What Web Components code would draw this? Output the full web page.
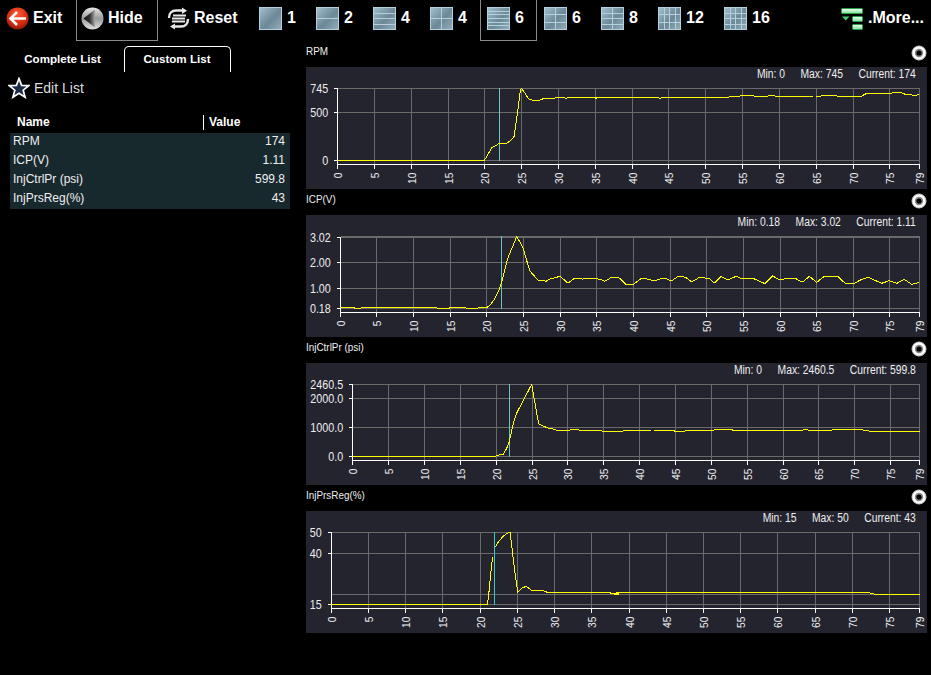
<!DOCTYPE html>
<html>

<head>
  <title>Data Graph</title>
  <style>
    html, body { margin: 0; background: #000; height: 100%; overflow: hidden; }
    body { font-family: "Liberation Sans", Arial, sans-serif; color: #fff; }
  </style>
</head>

<body>
  <scan-app></scan-app>

  <script>
    const FONT = '"Liberation Sans", Arial, sans-serif';

    // convert crop coordinates to page coordinates
    const toPage = (ox, oy, pts) => pts.map(p => [ox + p[0] / 3, oy + p[1] / 3]);

    const CHARTS = {
      rpm: {
        title: 'RPM', min: '0', max: '745', current: '174', top: 67,
        x0: 337.7, x1: 919.3, axis: 164, cursor: 499, cursorColor: '#6cc4c4',
        grid: [[88, '745'], [112, '500'], [160, '0']],
        lines: [
          toPage(300, 60, [[113, 301], [553, 301], [560, 290], [575, 263], [590, 255], [598, 250], [620, 250], [630, 243], [642, 230], [648, 190], [655, 140], [660, 100], [664, 85], [672, 95], [686, 117], [695, 120], [708, 123], [720, 120], [733, 115], [762, 115], [775, 111], [790, 113], [800, 115], [806, 112], [883, 112], [888, 115], [893, 112], [960, 112]])
            .concat(toPage(620, 60, [[112, 112], [120, 116], [128, 112], [326, 112], [328, 109], [360, 109], [364, 105], [398, 105], [402, 108], [444, 108], [448, 105], [460, 105], [464, 108], [578, 108]])),
          toPage(620, 60, [[588, 109], [602, 109], [606, 105], [646, 105], [650, 108], [725, 108], [735, 103], [740, 100], [810, 100], [825, 98], [835, 97], [850, 100], [855, 103], [870, 103], [875, 105], [890, 105], [898, 103]])
        ]
      },
      icp: {
        title: 'ICP(V)', min: '0.18', max: '3.02', current: '1.11', top: 215,
        x0: 340.3, x1: 919.3, axis: 312, cursor: 501, cursorColor: '#6cc4c4',
        grid: [[236, ''], [237, '3.02'], [262, '2.00'], [288, '1.00'], [308, '0.18']],
        lines: [
          toPage(300, 195, [[121, 337], [160, 337], [165, 340], [183, 340], [185, 337], [410, 337], [412, 340], [448, 340], [450, 337], [497, 337], [499, 340], [534, 340], [536, 337], [562, 337], [572, 328], [585, 310], [595, 290], [604, 265], [612, 235], [622, 195], [628, 178], [640, 150], [650, 125], [660, 142], [670, 160], [678, 190], [690, 228], [703, 243], [715, 256], [730, 256], [738, 259], [752, 251], [765, 248], [780, 244], [790, 252], [800, 262], [808, 262], [822, 251], [845, 251], [848, 253], [850, 251], [892, 251], [905, 255], [914, 259], [925, 253], [933, 247]])
            .concat(toPage(611, 195, [[22, 247], [30, 253], [45, 268], [67, 268], [90, 251], [100, 250], [115, 254], [132, 257], [152, 250], [165, 251], [175, 256], [185, 255], [200, 245], [212, 244], [225, 248], [240, 259], [250, 257], [265, 247], [288, 250], [297, 252], [309, 265], [330, 245], [345, 252], [355, 253], [375, 244], [390, 250], [425, 250], [440, 256], [462, 266], [485, 243], [502, 253], [518, 253], [522, 250], [553, 250], [570, 260], [578, 259], [595, 244], [617, 262], [640, 244], [683, 246], [690, 254], [703, 265], [730, 265], [750, 254], [772, 247], [790, 255], [812, 265], [835, 257], [858, 265], [880, 253], [902, 268], [925, 262]]))
        ]
      },
      inj: {
        title: 'InjCtrlPr (psi)', min: '0', max: '2460.5', current: '599.8', top: 363,
        x0: 352.7, x1: 919.3, axis: 460, cursor: 509, cursorColor: '#6cc4c4',
        grid: [[384, '2460.5'], [398, '2000.0'], [427, '1000.0'], [456, '0.0']],
        lines: [
          toPage(300, 340, [[158, 349], [587, 349], [590, 346], [610, 343], [620, 325], [628, 305], [640, 250], [652, 215], [668, 185], [695, 133], [705, 190], [716, 252], [730, 258], [745, 265], [765, 268], [770, 271], [810, 271], [812, 268], [836, 268], [838, 271], [904, 271], [906, 274], [933, 274]])
            .concat(toPage(611, 340, [[36, 274], [38, 271], [120, 271]])),
          toPage(611, 340, [[129, 271], [189, 271], [191, 274], [221, 274], [223, 271], [308, 271], [310, 268], [363, 268], [365, 271], [575, 271], [577, 268], [590, 268], [592, 271], [662, 271], [664, 268], [755, 268], [757, 271], [773, 271], [775, 274], [926, 274]])
        ]
      },
      reg: {
        title: 'InjPrsReg(%)', min: '15', max: '50', current: '43', top: 511,
        x0: 331.3, x1: 919.3, axis: 608, cursor: 494, cursorColor: '#3cc8c8',
        grid: [[532, '50'], [553, '40'], [594, ''], [604, '15']],
        lines: [
          toPage(300, 485, [[94, 358], [562, 358], [566, 330], [572, 265], [578, 215]]),
          toPage(300, 485, [[586, 187], [590, 178], [600, 165], [610, 153], [620, 146], [630, 142], [636, 190], [642, 240], [650, 300], [653, 322], [665, 310], [678, 304], [695, 316], [728, 316], [742, 322], [930, 322], [932, 325], [945, 325], [947, 326], [960, 322]])
            .concat(toPage(611, 340, [[8, 760], [10, 763], [22, 763], [24, 757], [776, 757], [778, 760], [788, 760], [790, 763], [926, 763]]))
        ]
      }
    };

    const crisp = v => Math.floor(v) + 0.5;

    class ScanApp extends HTMLElement {
      connectedCallback() {
        this.attachShadow({ mode: 'open' }).innerHTML = `
          <style>
            :host { display: flex; flex-direction: column; height: 675px; background: #000; color: #fff; font-family: ${FONT}; }
            main { display: flex; flex: 1; }
            .right { display: flex; flex-direction: column; }
          </style>
          <scan-toolbar></scan-toolbar>
          <main>
            <scan-list></scan-list>
            <div class="right">
              <chart-panel chart="rpm"></chart-panel>
              <chart-panel chart="icp"></chart-panel>
              <chart-panel chart="inj"></chart-panel>
              <chart-panel chart="reg"></chart-panel>
            </div>
          </main>`;
      }
    }

    class ScanToolbar extends HTMLElement {
      connectedCallback() {
        this.attachShadow({ mode: 'open' }).innerHTML = `
          <style>
            :host { display: flex; height: 41px; }
            .end { margin-left: auto; }
          </style>
          <tool-button icon="exit" w="76" pad="5" gap="4">Exit</tool-button>
          <tool-button icon="hide" w="82" pad="4" gap="4" active>Hide</tool-button>
          <tool-button icon="reset" w="94" pad="8" gap="4">Reset</tool-button>
          <tool-button icon="1x1" w="57">1</tool-button>
          <tool-button icon="2x1" w="57">2</tool-button>
          <tool-button icon="4x1" w="57">4</tool-button>
          <tool-button icon="2x2" w="57">4</tool-button>
          <tool-button icon="6x1" w="57" active>6</tool-button>
          <tool-button icon="3x2" w="57">6</tool-button>
          <tool-button icon="4x2" w="57">8</tool-button>
          <tool-button icon="3x4" w="66">12</tool-button>
          <tool-button icon="4x4" w="66">16</tool-button>
          <tool-button class="end" icon="more" w="97" pad="6" gap="4">.More...</tool-button>`;
      }
    }

    class ToolButton extends HTMLElement {
      connectedCallback() {
        const name = this.getAttribute('icon');
        const pad = this.getAttribute('pad') || 6;
        const gap = this.getAttribute('gap') || 5;
        this.attachShadow({ mode: 'open' }).innerHTML = `
          <style>
            :host { display: flex; align-items: center; box-sizing: border-box; height: 41px; width: ${this.getAttribute('w')}px;
                    padding: 0 0 4px ${pad}px; gap: ${gap}px; border: 1px solid transparent; border-top: 0;
                    font: bold 16px ${FONT}; color: #fff; white-space: nowrap; }
            :host([active]) { border-color: #8a8a8a; }
            svg { display: block; flex: none; }
          </style>
          ${this.icon(name)}<slot></slot>`;
      }

      icon(name) {
        const m = name.match(/^(\d)x(\d)$/);
        if (m) return this.tile(+m[1], +m[2]);
        if (name === 'exit') return `<svg width="23" height="23" viewBox="0 0 23 23">
          <defs><radialGradient id="r" cx=".5" cy=".3" r=".8"><stop offset="0" stop-color="#ff5a30"/><stop offset=".6" stop-color="#d02a10"/><stop offset="1" stop-color="#701000"/></radialGradient></defs>
          <circle cx="11.5" cy="11.5" r="11" fill="url(#r)"/>
          <path d="M11 5 L4.5 11.5 L11 18 M5 11.5 H20" fill="none" stroke="#fff" stroke-width="2.6"/></svg>`;
        if (name === 'hide') return `<svg width="23" height="23" viewBox="0 0 23 23">
          <defs><linearGradient id="h" x1="0" y1="0" x2="0" y2="1"><stop offset="0" stop-color="#e8e8e8"/><stop offset=".5" stop-color="#9a9a9a"/><stop offset="1" stop-color="#e0e0e0"/></linearGradient>
          <linearGradient id="t" x1="0" y1="0" x2="1" y2="0"><stop offset="0" stop-color="#111"/><stop offset=".55" stop-color="#333"/><stop offset="1" stop-color="#aaa"/></linearGradient></defs>
          <circle cx="11.5" cy="11.5" r="11" fill="url(#h)"/>
          <path d="M2.5 11.5 L14 2.5 V20.5 Z" fill="url(#t)"/></svg>`;
        if (name === 'reset') return `<svg width="23" height="23" viewBox="0 0 23 23" fill="none" stroke="#e8e8e8">
          <path d="M2 11 C2 6 5 3.5 9 3.5 H16" stroke-width="2.4"/><path d="M15 0.5 L20 3.8 L15 7 Z" fill="#e8e8e8" stroke="none"/>
          <path d="M21 12 C21 17 18 19.5 14 19.5 H7" stroke-width="2.4"/><path d="M8 16.5 L3 19.5 L8 22.5 Z" fill="#e8e8e8" stroke="none"/>
          <path d="M6 8.5 H19 M5 11.5 H18 M5 14.5 H18" stroke-width="1.8"/></svg>`;
        return `<svg width="23" height="23" viewBox="0 0 23 23" stroke="#25a045">
          <defs><linearGradient id="g" x1="0" y1="0" x2="0" y2="1"><stop offset="0" stop-color="#f4fff6"/><stop offset="1" stop-color="#7fe09a"/></linearGradient></defs>
          <rect x=".5" y="1.5" width="21" height="5" rx="1" fill="url(#g)"/>
          <rect x="11.5" y="9.5" width="10" height="5" rx="1" fill="url(#g)"/>
          <rect x="11.5" y="17.5" width="10" height="5" rx="1" fill="url(#g)"/>
          <path d="M1 9.5 H8.5 L4.7 13.5 Z" fill="#3fd070" stroke="none"/></svg>`;
      }

      // layout tile: rows x cols
      tile(rows, cols) {
        let lines = '';
        for (let i = 1; i < rows; i++) {
          const y = Math.round(i * 22 / rows) + 0.5;
          lines += `<path d="M0 ${y} H23"/>`;
        }
        for (let i = 1; i < cols; i++) {
          const x = Math.round(i * 22 / cols) + 0.5;
          lines += `<path d="M${x} 0 V23"/>`;
        }
        const id = 'm' + rows + cols;
        return `<svg width="23" height="23" viewBox="0 0 23 23" shape-rendering="crispEdges">
          <defs><linearGradient id="${id}" x1="0" y1="0" x2="1" y2="1"><stop offset="0" stop-color="#a3c0ce"/><stop offset=".55" stop-color="#6c8897"/><stop offset="1" stop-color="#93afbc"/></linearGradient></defs>
          <rect x=".5" y=".5" width="22" height="22" fill="url(#${id})" stroke="#b4d0de"/>
          <g stroke="#b4d0de" fill="none">${lines}</g></svg>`;
      }
    }

    class ScanList extends HTMLElement {
      connectedCallback() {
        this.attachShadow({ mode: 'open' }).innerHTML = `
          <style>
            :host { display: block; width: 306px; flex: none; font-family: ${FONT}; color: #fff; }
            .tabs { display: flex; height: 26px; margin: 5px 0 0 8px; font: bold 11.6px ${FONT}; }
            .tab { display: flex; align-items: center; justify-content: center; box-sizing: border-box; padding-bottom: 2px; }
            .tab.first { width: 109px; margin-right: 7px; }
            .tab.on { width: 107px; padding-right: 1px; border: 1px solid #fff; border-bottom: 0; border-radius: 5px 5px 0 0; }
            .edit { display: flex; align-items: center; gap: 4px; margin: 5px 0 0 8px; height: 22px; font-size: 14px; color: #ddd; }
            .head { display: flex; margin: 16px 0 0 10px; width: 280px; height: 18px; font: bold 12px ${FONT}; box-sizing: border-box; }
            .head span:first-child { width: 193px; padding-left: 7px; box-sizing: border-box; line-height: 15px; }
            .head span:last-child { border-left: 1px solid #fff; height: 15px; line-height: 15px; padding-left: 5px; }
            .rows { width: 280px; margin-left: 10px; background: #18292e; font-size: 12px; color: #eee; }
            .row { display: flex; justify-content: space-between; height: 19px; line-height: 16px; padding: 0 5px 0 3px; }
          </style>
          <div class="tabs"><div class="tab first">Complete List</div><div class="tab on">Custom List</div></div>
          <div class="edit">
            <svg width="22" height="22" viewBox="0 0 22 22"><path d="M11 1.5 L13.6 8.3 L20.8 8.6 L15.2 13.2 L17.1 20.2 L11 16.2 L4.9 20.2 L6.8 13.2 L1.2 8.6 L8.4 8.3 Z" fill="#1b2c48" stroke="#fff" stroke-width="1.7"/></svg>
            Edit List
          </div>
          <div class="head"><span>Name</span><span>Value</span></div>
          <div class="rows">
            <div class="row"><span>RPM</span><span>174</span></div>
            <div class="row"><span>ICP(V)</span><span>1.11</span></div>
            <div class="row"><span>InjCtrlPr (psi)</span><span>599.8</span></div>
            <div class="row"><span>InjPrsReg(%)</span><span>43</span></div>
          </div>`;
      }
    }

    class ChartPanel extends HTMLElement {
      connectedCallback() {
        const c = CHARTS[this.getAttribute('chart')];
        this.attachShadow({ mode: 'open' }).innerHTML = `
          <style>
            :host { display: block; width: 621px; font-family: ${FONT}; color: #eee; }
            .title { display: flex; justify-content: space-between; height: 26px; }
            .title span { font-size: 11.5px; line-height: 14px; margin-top: 3px; transform: scaleX(.86); transform-origin: left; white-space: nowrap; }
            .title svg { margin: 4px 0 0 0; }
            .box { height: 122px; background: #24242e; }
            .stats { display: flex; justify-content: flex-end; gap: 18px; height: 18px; line-height: 15px; font-size: 12px; padding-right: 13px; box-sizing: border-box;
                     transform: scaleX(.86); transform-origin: right; white-space: nowrap; }
            svg.plot { display: block; overflow: visible; }
          </style>
          <div class="title"><span>${c.title}</span>
            <svg width="16" height="16" viewBox="0 0 16 16"><circle cx="8" cy="8" r="7" fill="#fff" stroke="#ccc"/><circle cx="8" cy="8" r="4.2" fill="#888"/><circle cx="8" cy="8" r="2.6" fill="#000"/></svg>
          </div>
          <div class="box">
            <div class="stats"><span>Min: ${c.min}</span><span>Max: ${c.max}</span><span>Current: ${c.current}</span></div>
            ${this.plot(c)}
          </div>`;
      }

      plot(c) {
        const scale = (c.x1 - c.x0) / 79;
        const left = crisp(c.x0), right = crisp(c.x1), axis = c.axis + 0.5;
        const ticks = [];
        for (let t = 0; t < 79; t += 5) ticks.push(t);
        ticks.push(79);

        let grid = '', white = `M${left} ${c.grid[0][0] + .5} V${axis + 1} M${left} ${axis} H${right}`, text = '';
        ticks.forEach(t => {
          const x = crisp(c.x0 + t * scale);
          if (t > 0) grid += `M${x} ${c.grid[0][0]} V${axis}`;
          white += `M${x} ${axis} v4`;
          text += `<text transform="translate(${x + 4} ${c.axis + 8.5}) rotate(-90) scale(.93 1)" text-anchor="end" font-size="11">${t}</text>`;
        });
        c.grid.forEach(([y, label]) => {
          grid += `M${left} ${y + .5} H${right}`;
          if (label) {
            white += `M${left - 4} ${y + .5} H${left}`;
            text += `<text transform="translate(${c.x0 - 9.5} ${y + 5}) scale(.86 1)" text-anchor="end" font-size="12.5">${label}</text>`;
          }
        });
        const first = c.grid[0][0];
        const zero = c.grid[c.grid.length - 1][0];
        const lines = c.lines.map(l => `<polyline points="${l.map(p => p[0].toFixed(1) + ',' + p[1].toFixed(1)).join(' ')}"/>`).join('');

        return `<svg class="plot" width="621" height="104" viewBox="306 ${c.top + 18} 621 104">
          <g shape-rendering="crispEdges" fill="none">
            <path d="${grid}" stroke="#6a6a6a"/>
            <path d="M${crisp(c.cursor)} ${first} V${zero + 1}" stroke="${c.cursorColor}"/>
            <path d="${white}" stroke="#fff"/>
            <g stroke="#ffff00" stroke-width="1">${lines}</g>
          </g>
          <g fill="#eee" font-family='${FONT}'>${text}</g>
        </svg>`;
      }
    }

    customElements.define('tool-button', ToolButton);
    customElements.define('scan-toolbar', ScanToolbar);
    customElements.define('scan-list', ScanList);
    customElements.define('chart-panel', ChartPanel);
    customElements.define('scan-app', ScanApp);
  </script>
</body>

</html>
